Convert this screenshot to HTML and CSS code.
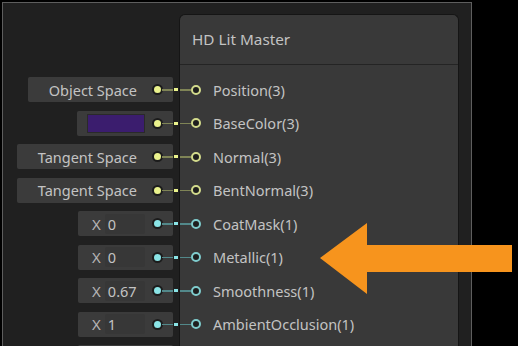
FILE: index.html
```html
<!DOCTYPE html>
<html lang="en">
<head>
    <meta charset="UTF-8">
    <title>HD Lit Master</title>
    <link rel="stylesheet" href="styles.css">
</head>
<body>
    <div class="panel">
        <div class="graph">
            <div class="inputs">
                <div class="slot">
                    <div class="field-node space-obj"><span class="text">Object Space</span><span class="pin vec"><i class="dot"></i><i class="wire"></i></span></div>
                    <span class="link vec"></span>
                </div>
                <div class="slot">
                    <div class="field-node swatch-node"><span class="swatch"></span><span class="pin vec"><i class="dot"></i><i class="wire"></i></span></div>
                    <span class="link vec"></span>
                </div>
                <div class="slot">
                    <div class="field-node space-tan"><span class="text">Tangent Space</span><span class="pin vec"><i class="dot"></i><i class="wire"></i></span></div>
                    <span class="link vec"></span>
                </div>
                <div class="slot">
                    <div class="field-node space-tan"><span class="text">Tangent Space</span><span class="pin vec"><i class="dot"></i><i class="wire"></i></span></div>
                    <span class="link vec"></span>
                </div>
                <div class="slot">
                    <div class="field-node num"><span class="axis">X</span><span class="input">0</span><span class="pin flt"><i class="dot"></i><i class="wire"></i></span></div>
                    <span class="link flt"></span>
                </div>
                <div class="slot">
                    <div class="field-node num"><span class="axis">X</span><span class="input">0</span><span class="pin flt"><i class="dot"></i><i class="wire"></i></span></div>
                    <span class="link flt"></span>
                </div>
                <div class="slot">
                    <div class="field-node num"><span class="axis">X</span><span class="input">0.67</span><span class="pin flt"><i class="dot"></i><i class="wire"></i></span></div>
                    <span class="link flt"></span>
                </div>
                <div class="slot">
                    <div class="field-node num"><span class="axis">X</span><span class="input">1</span><span class="pin flt"><i class="dot"></i><i class="wire"></i></span></div>
                    <span class="link flt"></span>
                </div>
                <div class="slot">
                    <div class="field-node num"></div>
                    <span class="link"></span>
                </div>
            </div>
            <div class="node">
                <div class="node-title">HD Lit Master</div>
                <div class="ports">
                    <div class="port vec"><i class="wire"></i><i class="ring"></i><span>Position(3)</span></div>
                    <div class="port vec"><i class="wire"></i><i class="ring"></i><span>BaseColor(3)</span></div>
                    <div class="port vec"><i class="wire"></i><i class="ring"></i><span>Normal(3)</span></div>
                    <div class="port vec"><i class="wire"></i><i class="ring"></i><span>BentNormal(3)</span></div>
                    <div class="port flt"><i class="wire"></i><i class="ring"></i><span>CoatMask(1)</span></div>
                    <div class="port flt"><i class="wire"></i><i class="ring"></i><span>Metallic(1)</span></div>
                    <div class="port flt"><i class="wire"></i><i class="ring"></i><span>Smoothness(1)</span></div>
                    <div class="port flt"><i class="wire"></i><i class="ring"></i><span>AmbientOcclusion(1)</span></div>
                </div>
            </div>
        </div>
    </div>
    <svg class="arrow" width="192" height="72" viewBox="0 0 192 72">
        <polygon points="0,35 47,0 47,22 192,22 192,49 47,49 47,71" fill="#f7941d"/>
    </svg>
</body>
</html>
```
FILE: styles.css
```css
body { margin: 0; background: #000; font-family: "Noto Sans", "Open Sans", sans-serif; color: #c3c3c3; height: 346px; overflow: hidden; position: relative; }
.panel { margin: 2px 0 0 2px; width: 468px; height: 344px; border: 1px solid #5e5e5e; border-bottom: 0; background: #202020; overflow: hidden; }
.graph { display: grid; grid-template-columns: 176px 280px; }

/* left input stubs */
.inputs { padding-top: 70px; }
.slot { height: 33.5px; display: flex; align-items: center; justify-content: flex-end; }
.field-node { display: flex; align-items: center; height: 25px; background: #3b3b3b; border-radius: 2px; font-size: 14.5px; }
.space-obj { width: 145px; justify-content: flex-end; }
.space-tan { width: 156px; justify-content: flex-end; }
.text { margin-right: 8px; }
.swatch-node { width: 96px; justify-content: flex-end; }
.swatch { width: 58px; height: 19px; background: #3b1d6e; border: 1px solid #2a2a2a; box-sizing: border-box; }
.num { width: 95px; padding-left: 14px; box-sizing: border-box; }
.axis { width: 12px; font-size: 15px; color: #b4b4b4; }
.input { width: 41px; height: 20px; line-height: 20px; margin-left: 1px; padding-left: 3px; box-sizing: border-box; background: #373737; border-radius: 2px; }

.pin { width: 28px; display: flex; align-items: center; }
.pin .dot { margin-left: 9px; width: 7px; height: 7px; border-radius: 50%; box-shadow: 0 0 0 2px #1c1c1c; }
.pin .wire { flex: 1; margin-left: 1px; height: 1.5px; }
.link { width: 6px; height: 3px; position: relative; }
.link::after { content: ""; position: absolute; left: 1px; top: 0; width: 4px; height: 3px; }

.vec .dot, .vec.link::after { background: #eaf28c; }
.flt .dot, .flt.link::after { background: #8ae4e6; }
.vec .wire { background: #7f8456; }
.flt .wire { background: #52888a; }

/* master node */
.node { margin-top: 11px; height: 400px; background: #393939; border: 1px solid #151515; border-bottom: 0; border-radius: 6px 6px 0 0; }
.node-title { height: 49px; line-height: 49px; padding-left: 12px; font-size: 15.3px; border-bottom: 1px solid #242424; }
.ports { padding-top: 8px; }
.port { height: 33.5px; display: flex; align-items: center; font-size: 14.5px; }
.port .wire { width: 11px; height: 1.5px; }
.port .ring { width: 10px; height: 10px; border: 2px solid; border-radius: 50%; box-sizing: border-box; background: #1e1e1e; }
.port.vec .ring { border-color: #d3db8c; }
.port.flt .ring { border-color: #7fcccd; }
.port span { margin-left: 12px; }

.arrow { position: absolute; left: 320px; top: 223px; }
```
